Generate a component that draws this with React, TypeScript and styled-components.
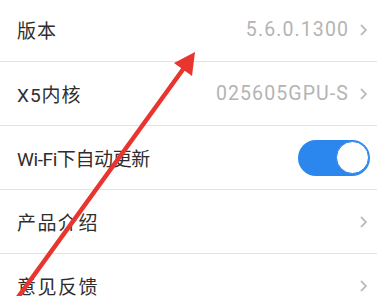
import React from "react";
import styled, { createGlobalStyle } from "styled-components";

const Global = createGlobalStyle`
  html, body { margin: 0; padding: 0; background: #fff; overflow: hidden; }
  body { font-family: Roboto, "Noto Sans CJK SC", sans-serif; }
`;

const Page = styled.div`
  position: relative;
  width: 377px;
  height: 296px;
  overflow: hidden;
  background: #fff;
`;

const List = styled.div`
  display: flex;
  flex-direction: column;
  margin-top: -2px;
`;

const Row = styled.div`
  display: flex;
  align-items: center;
  height: 63px;
  padding: 0 9px 0 17px;
  border-bottom: 1px solid #e3e3e3;
  flex-shrink: 0;
`;

const Label = styled.span<{ $spacing: number }>`
  flex: 1;
  font-size: 19px;
  color: #2e2e2e;
  font-family: Roboto, "Noto Sans CJK SC", sans-serif;
  letter-spacing: ${(p) => p.$spacing}px;
  white-space: nowrap;
`;

const Value = styled.span`
  font-size: 19.5px;
  color: #b4b4b4;
  margin-right: 10px;
  letter-spacing: 1.1px;
`;

const Chevron = styled.svg`
  width: 9px;
  height: 14px;
  flex-shrink: 0;
`;

const Toggle = styled.div<{ $on: boolean }>`
  width: 72px;
  height: 36px;
  border-radius: 18px;
  background: ${(p) => (p.$on ? "#2b86ee" : "#ccc")};
  display: flex;
  align-items: center;
  justify-content: ${(p) => (p.$on ? "flex-end" : "flex-start")};
  padding: 0 1px;
  box-sizing: border-box;
  margin-right: -2px;
`;

const Knob = styled.div`
  width: 33px;
  height: 33px;
  border-radius: 50%;
  background: #fff;
  box-sizing: border-box;
  border: 1px solid #2b86ee;
`;

const Overlay = styled.svg`
  position: absolute;
  left: 0;
  top: 0;
  width: 377px;
  height: 296px;
  pointer-events: none;
`;

const ChevronIcon = () => (
  <Chevron viewBox="0 0 9 14">
    <path d="M2 2 L7 7 L2 12" fill="none" stroke="#bdbdbd" strokeWidth="1.8" />
  </Chevron>
);

const rows: { label: string; value?: string; toggle?: boolean; spacing: number }[] = [
  { label: "版本", value: "5.6.0.1300", spacing: 1 },
  { label: "X5内核", value: "025605GPU-S", spacing: 1 },
  { label: "Wi-Fi下自动更新", toggle: true, spacing: -0.4 },
  { label: "产品介绍", value: "", spacing: 1.5 },
  { label: "意见反馈", value: "", spacing: 1.5 },
];

export default function App() {
  return (
    <Page>
      <Global />
      <List>
        {rows.map((r) => (
          <Row key={r.label}>
            <Label $spacing={r.spacing}>{r.label}</Label>
            {r.toggle ? (
              <Toggle $on>
                <Knob />
              </Toggle>
            ) : (
              <>
                {r.value ? <Value>{r.value}</Value> : null}
                <ChevronIcon />
              </>
            )}
          </Row>
        ))}
      </List>
      <Overlay viewBox="0 0 377 296">
        <path d="M184 68 L16 300" stroke="#e8352f" strokeWidth="4.5" strokeLinecap="round" fill="none" />
        <polygon points="195,52 174,63 192,76" fill="#e8352f" />
      </Overlay>
    </Page>
  );
}
